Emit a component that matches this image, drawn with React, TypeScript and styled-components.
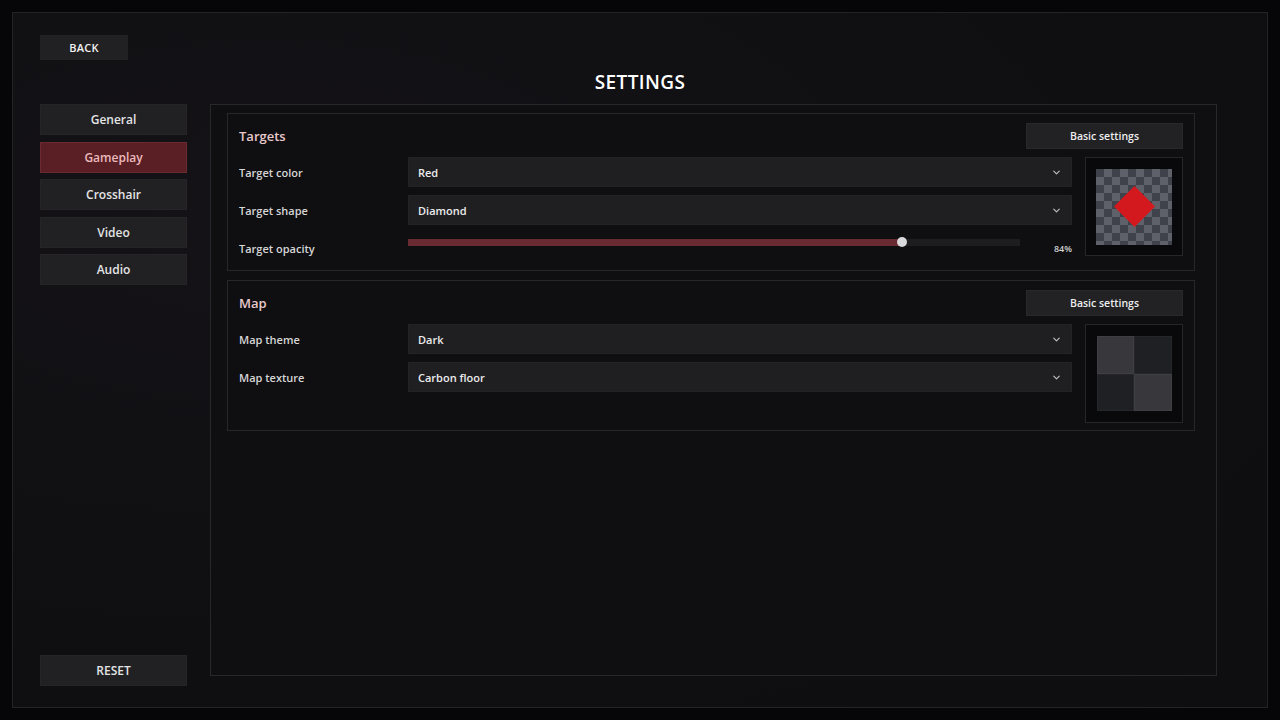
import React from "react";
import styled, { createGlobalStyle } from "styled-components";
import { ChevronDown } from "lucide-react";

const GlobalStyle = createGlobalStyle`
  html, body {
    margin: 0;
    padding: 0;
    background: #060608;
    font-family: "Open Sans", "Noto Sans", sans-serif;
  }
  * {
    box-sizing: border-box;
  }
`;

const Frame = styled.div`
  display: flex;
  flex-direction: column;
  width: 1256px;
  height: 696px;
  margin: 12px;
  padding: 22px 27px 21px;
  border: 1px solid #232327;
  background: radial-gradient(ellipse at 20% 30%, #141216 0%, #0f0f12 60%, #0e0e11 100%);
`;

const BackButton = styled.button`
  width: 88px;
  height: 25px;
  border: none;
  background: #212124;
  color: #f2f2f2;
  font-family: inherit;
  font-size: 11px;
  font-weight: 600;
  letter-spacing: 0.2px;
  padding: 0;
`;

const Title = styled.h1`
  margin: 0;
  height: 44px;
  line-height: 44px;
  text-align: center;
  color: #ffffff;
  font-size: 19px;
  font-weight: 600;
  letter-spacing: 0.4px;
`;

const Body = styled.div`
  flex: 1;
  display: flex;
  gap: 23px;
  min-height: 0;
`;

const Sidebar = styled.div`
  width: 147px;
  display: flex;
  flex-direction: column;
  justify-content: space-between;
`;

const NavList = styled.div`
  display: flex;
  flex-direction: column;
  gap: 6.5px;
`;

const NavButton = styled.button<{ $active?: boolean }>`
  height: 31px;
  width: 100%;
  border: 1px solid ${(p) => (p.$active ? "#6a2a30" : "#252528")};
  background: ${(p) => (p.$active ? "#5a1f25" : "#212124")};
  color: ${(p) => (p.$active ? "#eab9bd" : "#e4e4e4")};
  font-family: inherit;
  font-size: 12px;
  font-weight: 600;
  padding: 0;
`;

const Panel = styled.div`
  flex: 1;
  margin: 0 23px 10px 0;
  padding: 8px 21px 8px 16px;
  border: 1px solid #28282c;
  background: #0f0f12;
  display: flex;
  flex-direction: column;
  gap: 9px;
`;

const Section = styled.div`
  border: 1px solid #27272b;
  padding: 9px 11px 7px 11px;
  display: flex;
  flex-direction: column;
  gap: 8px;
`;

const SectionHead = styled.div`
  display: flex;
  align-items: center;
  justify-content: space-between;
  height: 26px;
`;

const SectionTitle = styled.div`
  color: #e9c9cc;
  font-size: 13px;
  font-weight: 600;
`;

const SmallButton = styled.button`
  width: 157px;
  height: 26px;
  border: 1px solid #29292d;
  background: #222225;
  color: #eeeeee;
  font-family: inherit;
  font-size: 10.5px;
  font-weight: 600;
  padding: 0;
`;

const SectionBody = styled.div`
  display: flex;
  gap: 13px;
  align-items: flex-start;
`;

const Rows = styled.div`
  flex: 1;
  display: flex;
  flex-direction: column;
  gap: 8px;
`;

const Row = styled.div`
  display: flex;
  align-items: center;
  height: 30px;
`;

const Label = styled.div`
  width: 169px;
  color: #d6d6d6;
  font-size: 11px;
  font-weight: 600;
`;

const SelectBox = styled.div`
  flex: 1;
  height: 30px;
  display: flex;
  align-items: center;
  justify-content: space-between;
  padding: 0 9px 0 9px;
  background: #1f1f22;
  border: 1px solid #232326;
  color: #ececec;
  font-size: 11px;
  font-weight: 600;
`;

const SliderWrap = styled.div`
  flex: 1;
  display: flex;
  align-items: center;
`;

const Track = styled.div`
  position: relative;
  flex: 1;
  height: 7px;
  margin-bottom: 12px;
  background: #1d1d20;
`;

const TrackFill = styled.div`
  height: 100%;
  background: #6a2a31;
`;

const Thumb = styled.div`
  position: absolute;
  top: 50%;
  width: 10px;
  height: 10px;
  margin: -5px 0 0 -5px;
  border-radius: 50%;
  background: #d9d9dc;
`;

const Percent = styled.div`
  width: 52px;
  text-align: right;
  color: #cfcfcf;
  font-size: 9px;
  font-weight: 600;
`;

const Preview = styled.div`
  width: 98px;
  height: 99px;
  border: 1px solid #26262a;
  background: #09090b;
  display: flex;
  align-items: center;
  justify-content: center;
`;

const Checker = styled.div`
  width: 76px;
  height: 76px;
  display: flex;
  align-items: center;
  justify-content: center;
  background: repeating-conic-gradient(#5e606a 0% 25%, #40424b 0% 50%) 0 0 / 16px 16px;
`;

const Diamond = styled.div`
  width: 29px;
  height: 29px;
  background: #d3191d;
  transform: rotate(45deg);
`;

const Tiles = styled.div`
  width: 75px;
  height: 75px;
  display: grid;
  grid-template-columns: 1fr 1fr;
  grid-template-rows: 1fr 1fr;
`;

const Tile = styled.div<{ $light?: boolean }>`
  background: ${(p) => (p.$light ? "#38383c" : "#1e2023")};
  border: 1px solid ${(p) => (p.$light ? "#3f3f43" : "#25272a")};
`;

const Select = ({ value }: { value: string }) => (
  <SelectBox>
    <span>{value}</span>
    <ChevronDown size={11} strokeWidth={2.6} color="#bdbdbd" />
  </SelectBox>
);

const navItems = ["General", "Gameplay", "Crosshair", "Video", "Audio"];

const App = (): React.ReactElement => {
  const opacity = 84;
  const sliderPos = ((opacity - 17) / 83) * 100;

  return (
    <>
      <GlobalStyle />
      <Frame>
        <BackButton>BACK</BackButton>
        <Title>SETTINGS</Title>
        <Body>
          <Sidebar>
            <NavList>
              {navItems.map((item) => (
                <NavButton key={item} $active={item === "Gameplay"}>
                  {item}
                </NavButton>
              ))}
            </NavList>
            <NavButton>RESET</NavButton>
          </Sidebar>
          <Panel>
            <Section>
              <SectionHead>
                <SectionTitle>Targets</SectionTitle>
                <SmallButton>Basic settings</SmallButton>
              </SectionHead>
              <SectionBody>
                <Rows>
                  <Row>
                    <Label>Target color</Label>
                    <Select value="Red" />
                  </Row>
                  <Row>
                    <Label>Target shape</Label>
                    <Select value="Diamond" />
                  </Row>
                  <Row>
                    <Label>Target opacity</Label>
                    <SliderWrap>
                      <Track>
                        <TrackFill style={{ width: `${sliderPos}%` }} />
                        <Thumb style={{ left: `${sliderPos}%` }} />
                      </Track>
                      <Percent>{opacity}%</Percent>
                    </SliderWrap>
                  </Row>
                </Rows>
                <Preview>
                  <Checker>
                    <Diamond />
                  </Checker>
                </Preview>
              </SectionBody>
            </Section>
            <Section>
              <SectionHead>
                <SectionTitle>Map</SectionTitle>
                <SmallButton>Basic settings</SmallButton>
              </SectionHead>
              <SectionBody>
                <Rows>
                  <Row>
                    <Label>Map theme</Label>
                    <Select value="Dark" />
                  </Row>
                  <Row>
                    <Label>Map texture</Label>
                    <Select value="Carbon floor" />
                  </Row>
                </Rows>
                <Preview>
                  <Tiles>
                    <Tile $light />
                    <Tile />
                    <Tile />
                    <Tile $light />
                  </Tiles>
                </Preview>
              </SectionBody>
            </Section>
          </Panel>
        </Body>
      </Frame>
    </>
  );
};

export default App;
